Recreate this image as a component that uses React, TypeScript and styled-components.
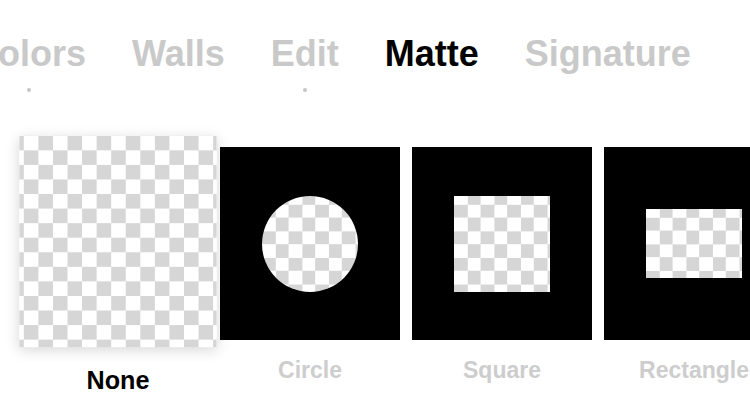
import React from "react";
import styled, { createGlobalStyle, css } from "styled-components";

type Shape = "none" | "circle" | "square" | "rectangle";

interface MatteOption {
  id: Shape;
  label: string;
}

const tabs = [
  { label: "Colors", dot: true },
  { label: "Walls", dot: false },
  { label: "Edit", dot: true },
  { label: "Matte", dot: false },
  { label: "Signature", dot: false },
];

const options: MatteOption[] = [
  { id: "none", label: "None" },
  { id: "circle", label: "Circle" },
  { id: "square", label: "Square" },
  { id: "rectangle", label: "Rectangle" },
];

const GlobalStyle = createGlobalStyle`
  html, body {
    margin: 0;
    padding: 0;
    background: #ffffff;
    overflow: hidden;
  }
  body {
    font-family: "Liberation Sans", Arial, Helvetica, sans-serif;
    -webkit-font-smoothing: antialiased;
  }
`;

const checker = css`
  background-color: #ffffff;
  background-image: conic-gradient(
    #d6d6d6 0 25%,
    #ffffff 0 50%,
    #d6d6d6 0 75%,
    #ffffff 0
  );
  background-size: 26.6px 26.6px;
`;

const Screen = styled.div`
  width: 750px;
  height: 413px;
  overflow: hidden;
  display: flex;
  flex-direction: column;
`;

// tab strip is scrolled, so "Colors" starts off the left edge
const TabBar = styled.div`
  display: flex;
  gap: 46px;
  margin-top: 34px;
  margin-left: -28px;
  white-space: nowrap;
`;

const Tab = styled.div<{ $active?: boolean }>`
  display: flex;
  flex-direction: column;
  align-items: center;
  font-size: 36px;
  line-height: 40px;
  font-weight: 700;
  color: ${(p) => (p.$active ? "#000000" : "#c9c9c9")};
`;

const Dot = styled.span<{ $visible: boolean }>`
  width: 4px;
  height: 4px;
  margin-top: 14px;
  border-radius: 50%;
  background: ${(p) => (p.$visible ? "#c6c6c6" : "transparent")};
`;

const Strip = styled.div`
  display: flex;
  gap: 12px;
  margin-top: 55px;
  margin-left: 28px;
`;

const Item = styled.div<{ $selected?: boolean }>`
  flex: 0 0 180px;
  display: flex;
  flex-direction: column;
  align-items: center;
  ${(p) =>
    p.$selected &&
    css`
      transform: scale(1.095);
      transform-origin: 50% 50%;
      position: relative;
      z-index: 1;
    `}
`;

const Card = styled.div<{ $shape: Shape }>`
  width: 180px;
  height: 193px;
  display: flex;
  align-items: center;
  justify-content: center;
  ${(p) =>
    p.$shape === "none"
      ? css`
          ${checker};
          background-position: 4px 0;
          box-shadow: 0 3px 12px rgba(0, 0, 0, 0.16);
        `
      : css`
          background: #000000;
        `}
`;

const Hole = styled.div<{ $shape: Shape }>`
  ${checker};
  width: 96px;
  height: ${(p) => (p.$shape === "rectangle" ? "69px" : "96px")};
  border-radius: ${(p) => (p.$shape === "circle" ? "50%" : "0")};
  background-position: 0 -5px;
`;

const Label = styled.div<{ $selected?: boolean }>`
  margin-top: 17px;
  font-size: 23px;
  line-height: 26px;
  font-weight: 700;
  white-space: nowrap;
  color: ${(p) => (p.$selected ? "#000000" : "#cdcdcd")};
`;

export default function App() {
  const selected: Shape = "none";
  return (
    <>
      <GlobalStyle />
      <Screen>
        <TabBar>
          {tabs.map((t) => (
            <Tab key={t.label} $active={t.label === "Matte"}>
              {t.label}
              <Dot $visible={t.dot} />
            </Tab>
          ))}
        </TabBar>
        <Strip>
          {options.map((o) => (
            <Item key={o.id} $selected={o.id === selected}>
              <Card $shape={o.id}>
                {o.id !== "none" && <Hole $shape={o.id} />}
              </Card>
              <Label $selected={o.id === selected}>{o.label}</Label>
            </Item>
          ))}
        </Strip>
      </Screen>
    </>
  );
}
